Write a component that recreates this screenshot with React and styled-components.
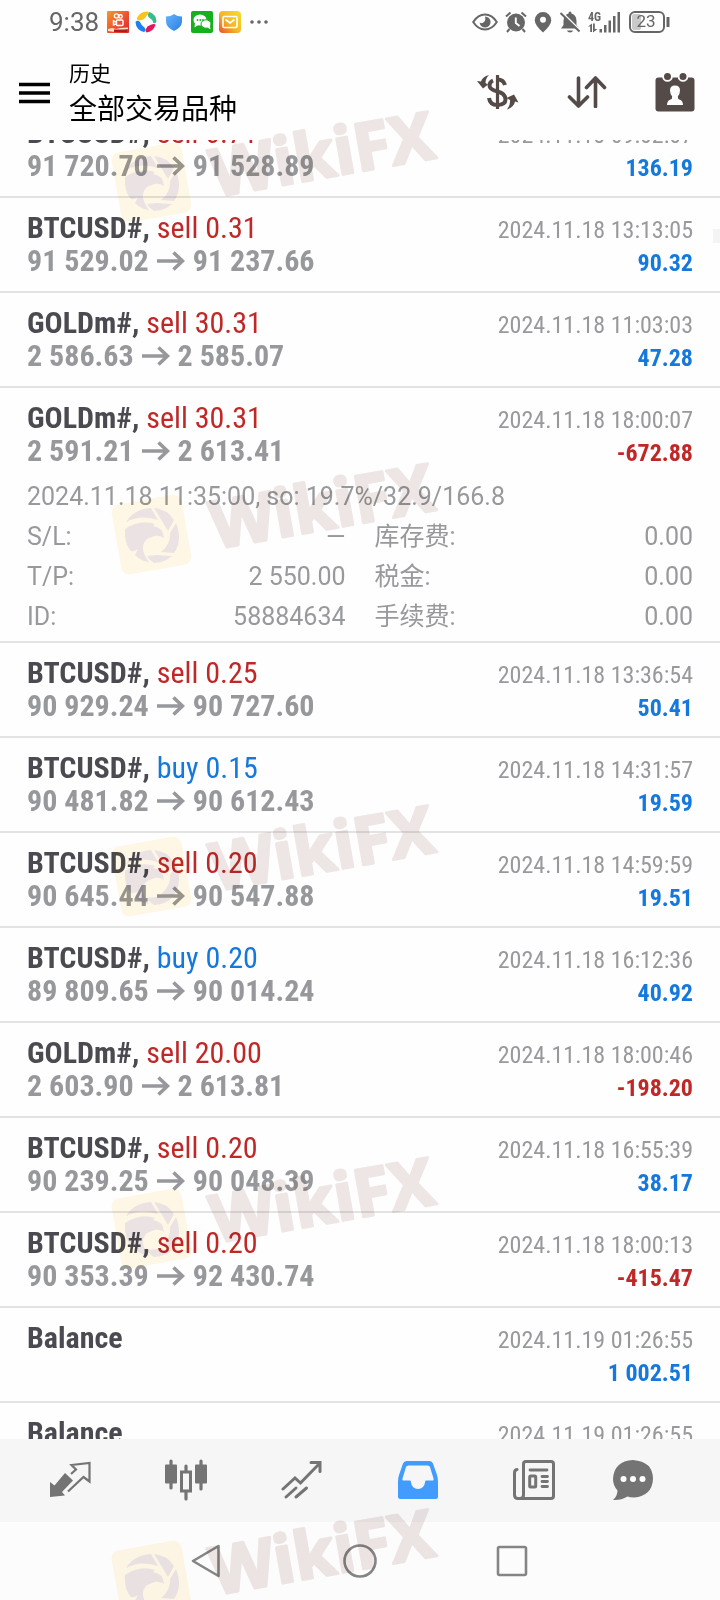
import { useLayoutEffect, useRef } from "react";
import styled, { createGlobalStyle } from "styled-components";

const GlobalStyle = createGlobalStyle`
  * {
    box-sizing: border-box;
  }
  body {
    margin: 0;
    background: #fefefe;
    font-family: Roboto, "Noto Sans CJK SC", sans-serif;
  }
  button {
    display: flex;
    align-items: center;
    justify-content: center;
    padding: 0;
    border: none;
    background: none;
    color: inherit;
    cursor: pointer;
  }
  svg {
    display: block;
    flex: none;
  }
`;

const Screen = styled.div`
  position: relative;
  display: flex;
  flex-direction: column;
  height: 100vh;
  overflow: hidden;
  background: #fefefe;
`;

const StatusBar = styled.div`
  display: flex;
  align-items: center;
  justify-content: space-between;
  height: 46px;
  padding: 0 50px 2px 49px;
  color: #666;
`;

const StatusGroup = styled.div`
  display: flex;
  align-items: center;
  gap: ${(props) => props.$gap}px;
`;

const Clock = styled.time`
  margin-right: 2px;
  font-size: 26px;
  line-height: 30px;
`;

const Header = styled.header`
  display: flex;
  align-items: center;
  height: 94px;
  padding: 0 25px 0 19px;
`;

const MenuButton = styled.button`
  margin-right: 19px;
  color: #000;
`;

const Titles = styled.div`
  flex: 1;
  color: #000;
`;

const Subtitle = styled.div`
  font-size: 21px;
  line-height: 32px;
`;

const Title = styled.h1`
  margin: 2px 0 0;
  font-size: 28px;
  font-weight: 400;
  line-height: 36px;
`;

const Actions = styled.div`
  display: flex;
  gap: 48px;
  padding-bottom: 2px;
  color: #544a47;
`;

const ListArea = styled.main`
  position: relative;
  flex: 1;
  min-height: 0;
`;

const List = styled.ul`
  height: 100%;
  margin: 0;
  padding: 0;
  list-style: none;
  overflow-y: auto;
  scrollbar-width: none;
`;

const ScrollThumb = styled.div`
  position: absolute;
  top: 89px;
  right: 0;
  width: 7px;
  height: 14px;
  background: #f4f4f4;
`;

const Row = styled.li`
  padding: 13px 27px ${(props) => (props.$open ? 4 : 14)}px;
  border-bottom: 2px solid #e3e3e4;
  font-family: "Roboto Condensed", Roboto, sans-serif;
`;

const Line = styled.div`
  display: flex;
  align-items: baseline;
  height: 33px;
  line-height: 33px;

  /* keeps the small text on the same baseline when the left side is empty */
  &::before {
    content: "\\200b";
    width: 0;
    font-size: 30px;
  }
`;

const Symbol = styled.span`
  font-size: 30px;
  font-weight: 700;
  color: #4a4a50;
`;

const Side = styled.span`
  font-weight: 400;
  color: ${(props) => (props.$buy ? "#1478dc" : "#c02828")};
`;

const Prices = styled.span`
  display: flex;
  align-items: center;
  gap: 8px;
  font-size: 30px;
  font-weight: 700;
  color: #97989b;
`;

const DateText = styled.time`
  margin-left: auto;
  font-size: 24px;
  color: #98999c;
`;

const Profit = styled.span`
  margin-left: auto;
  font-size: 24px;
  font-weight: 700;
  color: ${(props) => (props.$loss ? "#c02828" : "#1478dc")};
`;

const Details = styled.div`
  margin-top: 10px;
  font-family: Roboto, "Noto Sans CJK SC", sans-serif;
  font-size: 25px;
  line-height: 40px;
  color: #98999c;
`;

const DetailGrid = styled.dl`
  display: grid;
  grid-template-columns: 1fr 1fr;
  column-gap: 29px;
  margin: 0;
`;

const DetailItem = styled.div`
  display: flex;
  justify-content: space-between;
  height: 40px;

  dd {
    margin: 0;
  }
`;

const TabBar = styled.nav`
  display: flex;
  height: 83px;
  padding: 0 46px 2px 12px;
  background: #f6f6f6;
  color: #747474;
`;

const Tab = styled.button`
  && {
    flex: ${(props) => (props.$last ? 82 : 116)};
    color: ${(props) => (props.$active ? "#429bff" : "inherit")};
  }
`;

const SystemBar = styled.nav`
  display: flex;
  align-items: center;
  justify-content: center;
  gap: 119px;
  height: 78px;
  background: #fcfcfc;
  color: #858585;
`;

const Marks = styled.div`
  position: absolute;
  inset: 0;
  overflow: hidden;
  pointer-events: none;
  mix-blend-mode: multiply;
`;

const Mark = styled.svg`
  position: absolute;
  left: 105px;
  top: ${(props) => props.$top}px;
`;

const deals = [
  { symbol: "BTCUSD#", side: "sell", volume: "0.71", from: "91 720.70", to: "91 528.89", date: "2024.11.18 09:02:07", profit: "136.19" },
  { symbol: "BTCUSD#", side: "sell", volume: "0.31", from: "91 529.02", to: "91 237.66", date: "2024.11.18 13:13:05", profit: "90.32" },
  { symbol: "GOLDm#", side: "sell", volume: "30.31", from: "2 586.63", to: "2 585.07", date: "2024.11.18 11:03:03", profit: "47.28" },
  {
    symbol: "GOLDm#", side: "sell", volume: "30.31", from: "2 591.21", to: "2 613.41", date: "2024.11.18 18:00:07", profit: "-672.88",
    comment: "2024.11.18 11:35:00, so: 19.7%/32.9/166.8",
    details: [
      ["S/L:", "—"], ["库存费:", "0.00"],
      ["T/P:", "2 550.00"], ["税金:", "0.00"],
      ["ID:", "58884634"], ["手续费:", "0.00"],
    ],
  },
  { symbol: "BTCUSD#", side: "sell", volume: "0.25", from: "90 929.24", to: "90 727.60", date: "2024.11.18 13:36:54", profit: "50.41" },
  { symbol: "BTCUSD#", side: "buy", volume: "0.15", from: "90 481.82", to: "90 612.43", date: "2024.11.18 14:31:57", profit: "19.59" },
  { symbol: "BTCUSD#", side: "sell", volume: "0.20", from: "90 645.44", to: "90 547.88", date: "2024.11.18 14:59:59", profit: "19.51" },
  { symbol: "BTCUSD#", side: "buy", volume: "0.20", from: "89 809.65", to: "90 014.24", date: "2024.11.18 16:12:36", profit: "40.92" },
  { symbol: "GOLDm#", side: "sell", volume: "20.00", from: "2 603.90", to: "2 613.81", date: "2024.11.18 18:00:46", profit: "-198.20" },
  { symbol: "BTCUSD#", side: "sell", volume: "0.20", from: "90 239.25", to: "90 048.39", date: "2024.11.18 16:55:39", profit: "38.17" },
  { symbol: "BTCUSD#", side: "sell", volume: "0.20", from: "90 353.39", to: "92 430.74", date: "2024.11.18 18:00:13", profit: "-415.47" },
  { symbol: "Balance", date: "2024.11.19 01:26:55", profit: "1 002.51" },
  { symbol: "Balance", date: "2024.11.19 01:26:55", profit: "" },
];

const Arrow = () => (
  <svg width="28" height="20" viewBox="0 0 28 20" fill="none" stroke="currentColor" strokeWidth="3.600">
    <path d="M0 10H25M16.500 1.500L25.500 10L16.500 18.500" />
  </svg>
);

const Deal = ({ deal }) => (
  <Row $open={Boolean(deal.details)}>
    <Line>
      <Symbol>
        {deal.symbol}
        {deal.side && (
          <>
            , <Side $buy={deal.side === "buy"}>{deal.side} {deal.volume}</Side>
          </>
        )}
      </Symbol>
      <DateText>{deal.date}</DateText>
    </Line>
    <Line>
      {deal.from && (
        <Prices>
          <span>{deal.from}</span>
          <Arrow />
          <span>{deal.to}</span>
        </Prices>
      )}
      <Profit $loss={deal.profit.startsWith("-")}>{deal.profit}</Profit>
    </Line>
    {deal.details && (
      <Details>
        <div>{deal.comment}</div>
        <DetailGrid>
          {deal.details.map(([label, value]) => (
            <DetailItem key={label}>
              <dt>{label}</dt>
              <dd>{value}</dd>
            </DetailItem>
          ))}
        </DetailGrid>
      </Details>
    )}
  </Row>
);

/* status bar icons */

const AppIcons = () => (
  <>
    <svg width="22" height="22" viewBox="0 0 22 22">
      <defs>
        <linearGradient id="video" x1="0" y1="0" x2="1" y2="1">
          <stop offset="0" stopColor="#f59a2c" />
          <stop offset="0.500" stopColor="#f0562f" />
          <stop offset="1" stopColor="#d8262b" />
        </linearGradient>
      </defs>
      <rect width="22" height="22" rx="1" fill="url(#video)" />
      <g fill="none" stroke="#fff" strokeWidth="1.400">
        <circle cx="9.500" cy="5" r="2.100" />
        <circle cx="13.500" cy="5.400" r="1.700" />
        <rect x="9.500" y="9" width="6.500" height="5.500" rx="1" />
        <path d="M9 11L6.500 9.800V14L9 13" />
      </g>
      <path d="M1 18L5 17L9 18L13 17L21 16.500V18L14 20L8 21L1 20Z" fill="#fbe0c4" />
      <path d="M7 18.500H20V21H7Z" fill="#a8201f" />
    </svg>
    <svg width="22" height="22" viewBox="0 0 22 22">
      <path d="M2 7Q5 0 13 .5Q15 2 11.500 5Q9 9 5 9.500Q1.500 9.500 2 7Z" fill="#f7c51e" />
      <path d="M14.500 1Q21 3.500 21.500 10Q21 13 18.500 12Q17 8 13.500 6Q12 3 14.500 1Z" fill="#37bd8c" />
      <path d="M20.500 14Q18 21 11.500 21.500Q9.500 19 12.500 15.500Q16 13 18.500 13Q20.500 13 20.500 14Z" fill="#e3175c" />
      <path d="M9 21Q1 19 .5 11Q2.500 8.500 5 11Q6 14 9.500 16.500Q12 20 9 21Z" fill="#1e7ff0" />
    </svg>
    <svg width="22" height="22" viewBox="0 0 22 22">
      <defs>
        <linearGradient id="shield" x1="0" y1="0" x2="1" y2="1">
          <stop offset="0" stopColor="#62b5f8" />
          <stop offset="1" stopColor="#2e7de6" />
        </linearGradient>
      </defs>
      <path d="M11 3Q14 5.500 19 5.500V11Q18.500 16.500 11 20Q3.500 16.500 3 11V5.500Q8 5.500 11 3Z" fill="url(#shield)" />
    </svg>
    <svg width="22" height="22" viewBox="0 0 22 22">
      <rect width="22" height="22" rx="2" fill="#14b11c" />
      <ellipse cx="9" cy="9" rx="6.500" ry="5.500" fill="#fff" />
      <path d="M4 12L3.500 16.500L8 13.500Z" fill="#fff" />
      <ellipse cx="15" cy="13" rx="5" ry="4.200" fill="#fff" stroke="#14b11c" />
      <path d="M16 16L19.500 18.500L18.800 14Z" fill="#fff" />
      <g fill="#14b11c">
        <circle cx="6.500" cy="9" r="0.900" />
        <circle cx="9.300" cy="9" r="0.900" />
        <circle cx="12" cy="9" r="0.900" />
      </g>
    </svg>
    <svg width="22" height="22" viewBox="0 0 22 22">
      <defs>
        <linearGradient id="mail" x1="1" y1="0" x2="0" y2="1">
          <stop offset="0" stopColor="#f4e02a" />
          <stop offset="0.550" stopColor="#f3b528" />
          <stop offset="1" stopColor="#e8502a" />
        </linearGradient>
      </defs>
      <rect width="22" height="22" rx="4" fill="url(#mail)" />
      <rect x="4" y="5.500" width="14" height="11" rx="1" fill="none" stroke="#fff" strokeWidth="1.600" />
      <path d="M6.500 8.500L11 12L15.500 8.500" fill="none" stroke="#fff" strokeWidth="1.600" />
    </svg>
    <svg width="22" height="22" viewBox="0 0 22 22" fill="currentColor">
      <circle cx="5" cy="11" r="1.800" />
      <circle cx="12" cy="11" r="1.800" />
      <circle cx="19" cy="11" r="1.800" />
    </svg>
  </>
);

const SystemIcons = () => (
  <>
    <svg width="26" height="22" viewBox="0 0 26 22">
      <path d="M1.200 11Q6 3.500 13 3.500T24.800 11Q20 18.500 13 18.500T1.200 11Z" fill="none" stroke="currentColor" strokeWidth="2" />
      <path d="M13 5.500A5.500 5.500 0 1 1 7.600 11.500Q10 13 12 11T13 5.500Z" fill="currentColor" />
    </svg>
    <svg width="22" height="22" viewBox="0 0 22 22">
      <circle cx="11" cy="11.500" r="9" fill="currentColor" />
      <path d="M10.800 6.500V12L14.500 15" fill="none" stroke="#fefefe" strokeWidth="1.900" />
      <path d="M1 5.500L5.500 1.500M21 5.500L16.500 1.500M4.500 18L2 21M17.500 18L20 21" stroke="currentColor" strokeWidth="2" />
    </svg>
    <svg width="18" height="22" viewBox="0 0 18 22">
      <path d="M9 1A8.300 8.300 0 0 1 17.300 9.300Q17 14.500 9 21.500Q1 14.500 .7 9.300A8.300 8.300 0 0 1 9 1ZM9 5.700A3 3 0 1 0 9 11.700A3 3 0 1 0 9 5.700Z" fill="currentColor" />
    </svg>
    <svg width="22" height="22" viewBox="0 0 22 22">
      <path d="M11 .5Q12.500 .5 12.500 2.500Q17.500 4 17.500 10V14L20 17.500H2L4.500 14V10Q4.500 4 9.500 2.500Q9.500 .5 11 .5Z" fill="currentColor" />
      <path d="M8 19.500H14Q13.500 21.500 11 21.500T8 19.500Z" fill="currentColor" />
      <path d="M3.500 2L22 20.500" stroke="#fefefe" strokeWidth="2" />
      <path d="M1.500 2L20.500 20.500" stroke="currentColor" strokeWidth="2" />
    </svg>
    <svg width="34" height="22" viewBox="0 0 34 22" fill="currentColor">
      <text x="0" y="9.500" fontFamily="Roboto Condensed" fontSize="12" fontWeight="700">4G</text>
      <path d="M0 15.500L4 12.500V21H2.200V15.500ZM5 12.500H6.800V18H9.500L5 21.500Z" />
      <rect x="11.500" y="18" width="2.500" height="3.500" />
      <rect x="16" y="14" width="2.500" height="7.500" />
      <rect x="20.500" y="9.500" width="2.500" height="12" />
      <rect x="25" y="5" width="2.500" height="16.500" />
      <rect x="29.500" y="1" width="2.500" height="20.500" />
    </svg>
    <svg width="41" height="22" viewBox="0 0 41 22">
      <rect x="3" y="3" width="9" height="16" rx="2" fill="#c9c9c9" />
      <rect x="1" y="1" width="34" height="20" rx="5" fill="none" stroke="currentColor" strokeWidth="2" />
      <path d="M39 6V16" stroke="currentColor" strokeWidth="3" />
      <text x="17" y="16" fontFamily="Roboto" fontSize="17" textAnchor="middle" fill="currentColor">23</text>
    </svg>
  </>
);

/* header icons */

const MenuIcon = () => (
  <svg width="31" height="22" viewBox="0 0 31 22" stroke="currentColor" strokeWidth="3.600">
    <path d="M0 2.500H31M0 11H31M0 19.500H31" />
  </svg>
);

const CurrencyIcon = () => (
  <svg width="42" height="36" viewBox="0 0 42 36">
    <g fill="none" stroke="currentColor">
      <path d="M20.500 1V35" strokeWidth="3.200" />
      <path d="M28 11Q26.500 5.500 20.500 5.500M16 6.500Q12.500 8 12.500 11.500Q12.500 15.500 20.500 17.500T28.500 25.500Q28.500 30.500 20.500 31Q13 31 12 24" strokeWidth="4" />
    </g>
    <g fill="currentColor">
      <path d="M12 1Q5.500 2.500 4 7.500L0 7L6 14.500L11 10.500L8.500 9Q8.500 4.500 12 1Z" />
      <path d="M30 35.500Q37 33 38 27.500L41.500 28.500L37 20.500L29.500 24L33 26Q33.500 31 30 35.500Z" />
    </g>
  </svg>
);

const SortIcon = () => (
  <svg width="40" height="32" viewBox="0 0 40 32" fill="none" stroke="currentColor" strokeWidth="3.600" strokeLinecap="round" strokeLinejoin="round">
    <path d="M11.500 2V30M2.500 21L11.500 30L20.500 21" />
    <path d="M28.500 30.500V2M19.500 11.500L28.500 2L37.500 11.500" />
  </svg>
);

const CalendarIcon = () => (
  <svg width="40" height="40" viewBox="0 0 40 40">
    <rect x="0.500" y="5.500" width="39" height="34" rx="3" fill="currentColor" />
    <g fill="currentColor" stroke="#fefefe" strokeWidth="1.800">
      <circle cx="12.500" cy="4.500" r="4.400" />
      <circle cx="28" cy="4.500" r="4.400" />
    </g>
    <path d="M20 13.500Q25 13.500 25 18.500Q25 22 22.800 24.500Q22.500 27 25 27.800Q28 29 28 33H12Q12 29 15 27.800Q17.500 27 17.200 24.500Q15 22 15 18.500Q15 13.500 20 13.500Z" fill="#fefefe" />
  </svg>
);

/* tab bar icons */

const QuotesIcon = () => (
  <svg width="42" height="38" viewBox="0 0 42 38">
    <path d="M1 36V21L5.500 24.500L16 12L24 19.500L13 31L16 34.500Z" fill="currentColor" />
    <path d="M22 13L27 8.500L22.500 4L40.500 2V20.500L34.500 16L19 30.500" fill="none" stroke="currentColor" strokeWidth="2.200" />
  </svg>
);

const ChartIcon = () => (
  <svg width="42" height="42" viewBox="0 0 42 42">
    <g fill="currentColor">
      <rect x="0" y="5.500" width="12" height="19" rx="1" />
      <rect x="30" y="5.500" width="12" height="19" rx="1" />
    </g>
    <path d="M6 2V29M36 2V30M21 7V12M21 33V40" stroke="currentColor" strokeWidth="3.200" strokeLinecap="round" />
    <rect x="16.500" y="13" width="9" height="19" fill="none" stroke="currentColor" strokeWidth="3" />
  </svg>
);

const TradeIcon = () => (
  <svg width="42" height="40" viewBox="0 0 42 40" fill="none" stroke="currentColor" strokeWidth="3" strokeLinecap="round">
    <path d="M2 29L14 18L19.500 23L38 4M30 2.500H39V11.500" />
    <path d="M5 37L15 28M15 37L25.500 28" />
  </svg>
);

const InboxIcon = () => (
  <svg width="42" height="40" viewBox="0 0 42 40">
    <path
      fillRule="evenodd"
      d="M9.500 1H32.500Q35 1 36 3.500L40 15Q41 18 41 22V36.500Q41 39 38.500 39H3.500Q1 39 1 36.500V22Q1 18 2 15L6 3.500Q7 1 9.500 1ZM11.500 5.500Q9.500 5.500 9 7L5.500 18.500Q5 20.500 6 20.500H13Q14 20.500 14 22.500Q15 29 21 29T28 22.500Q28 20.500 29 20.500H36Q37 20.500 36.500 18.500L33 7Q32.500 5.500 30.500 5.500Z"
      fill="currentColor"
    />
  </svg>
);

const NewsIcon = () => (
  <svg width="42" height="40" viewBox="0 0 42 40" fill="none" stroke="currentColor" strokeWidth="3" strokeLinecap="round">
    <path d="M4 9.500Q1.500 10 1.500 13V35Q1.500 38.500 5 38.500H38Q40.500 38.500 40.500 36V4Q40.500 1.500 38 1.500H13Q10.500 1.500 10.500 4V35Q10.500 38.500 7 38.500" />
    <path d="M17 10H34M29 16.500H34.500M29 21.500H34.500M29 26.500H34.500" strokeWidth="2.800" />
    <rect x="16.700" y="16" width="6" height="11" rx="1" />
  </svg>
);

const ChatIcon = () => (
  <svg width="42" height="42" viewBox="0 0 42 42">
    <path d="M21 1Q41 2.500 41 20Q40 37 22 38.500Q18 38.500 15.500 37.500Q9 41.500 1 41Q5.500 37 5.500 31.500Q1 26.500 1 20Q2 2 21 1Z" fill="currentColor" />
    <g fill="#fff">
      <circle cx="11.500" cy="20" r="3" />
      <circle cx="21" cy="20" r="3" />
      <circle cx="30.500" cy="20" r="3" />
    </g>
  </svg>
);

const Watermark = ({ top }) => (
  <Mark $top={top} width="345" height="160" viewBox="0 0 345 160" aria-hidden="true">
    <rect x="11" y="39" width="71" height="71" rx="8" transform="rotate(-10 47 75)" fill="#fff8e6" />
    <g transform="translate(7 35)" fill="#ece4e4">
      <path d="M14 27Q22 14 39 13L46 25Q29 19 14 27Z" />
      <path d="M42 13Q55 14 62 25L56 36Z" />
      <path d="M64 28Q71 45 62 58L49 57Q59 49 58 38Z" />
      <path d="M45 60L60 61Q52 68 42 68Q37 65 35 61Z" />
      <path d="M13 34Q28 24 43 29L41 31Q51 32 52 43Q46 39 40 42L35 44Q26 52 37 67Q29 66 23 60L26 54Q22 57 19 56Q12 49 13 34Z" />
    </g>
    <text
      x="110"
      y="89"
      transform="rotate(-10 110 89)"
      fontFamily="Open Sans, sans-serif"
      fontSize="66"
      fontWeight="700"
      fill="#eee7e6"
      stroke="#eee7e6"
      strokeWidth="3"
      strokeLinejoin="round"
    >
      WikiFX
    </text>
  </Mark>
);

const tabs = [
  { label: "行情", Icon: QuotesIcon },
  { label: "图表", Icon: ChartIcon },
  { label: "交易", Icon: TradeIcon },
  { label: "历史", Icon: InboxIcon, active: true },
  { label: "新闻", Icon: NewsIcon },
  { label: "消息", Icon: ChatIcon },
];

const App = () => {
  const list = useRef(null);

  // the first deal sits partly under the header
  useLayoutEffect(() => {
    list.current.scrollTop = 37;
  }, []);

  return (
    <Screen lang="zh-CN">
      <GlobalStyle />
      <StatusBar>
        <StatusGroup $gap={6}>
          <Clock>9:38</Clock>
          <AppIcons />
        </StatusGroup>
        <StatusGroup $gap={7}>
          <SystemIcons />
        </StatusGroup>
      </StatusBar>

      <Header>
        <MenuButton aria-label="菜单">
          <MenuIcon />
        </MenuButton>
        <Titles>
          <Subtitle>历史</Subtitle>
          <Title>全部交易品种</Title>
        </Titles>
        <Actions>
          <button aria-label="货币"><CurrencyIcon /></button>
          <button aria-label="排序"><SortIcon /></button>
          <button aria-label="日期"><CalendarIcon /></button>
        </Actions>
      </Header>

      <ListArea>
        <List ref={list}>
          {deals.map((deal, i) => (
            <Deal key={i} deal={deal} />
          ))}
        </List>
        <ScrollThumb />
      </ListArea>

      <TabBar>
        {tabs.map(({ label, Icon, active }, i) => (
          <Tab key={label} aria-label={label} $active={active} $last={i === tabs.length - 1}>
            <Icon />
          </Tab>
        ))}
      </TabBar>

      <SystemBar>
        <button aria-label="返回">
          <svg width="34" height="34" viewBox="0 0 34 34" fill="none" stroke="currentColor" strokeWidth="2.600" strokeLinejoin="round">
            <path d="M3 17L28.500 2V32Z" />
          </svg>
        </button>
        <button aria-label="主页">
          <svg width="34" height="34" viewBox="0 0 34 34" fill="none" stroke="currentColor" strokeWidth="2.600">
            <circle cx="17" cy="17" r="15.500" />
          </svg>
        </button>
        <button aria-label="最近">
          <svg width="34" height="34" viewBox="0 0 34 34" fill="none" stroke="currentColor" strokeWidth="2.600">
            <rect x="2" y="3" width="28" height="28" rx="1.500" />
          </svg>
        </button>
      </SystemBar>

      <Marks>
        {[108, 460, 802, 1154, 1506].map((top) => (
          <Watermark key={top} top={top} />
        ))}
      </Marks>
    </Screen>
  );
};

export default App;
